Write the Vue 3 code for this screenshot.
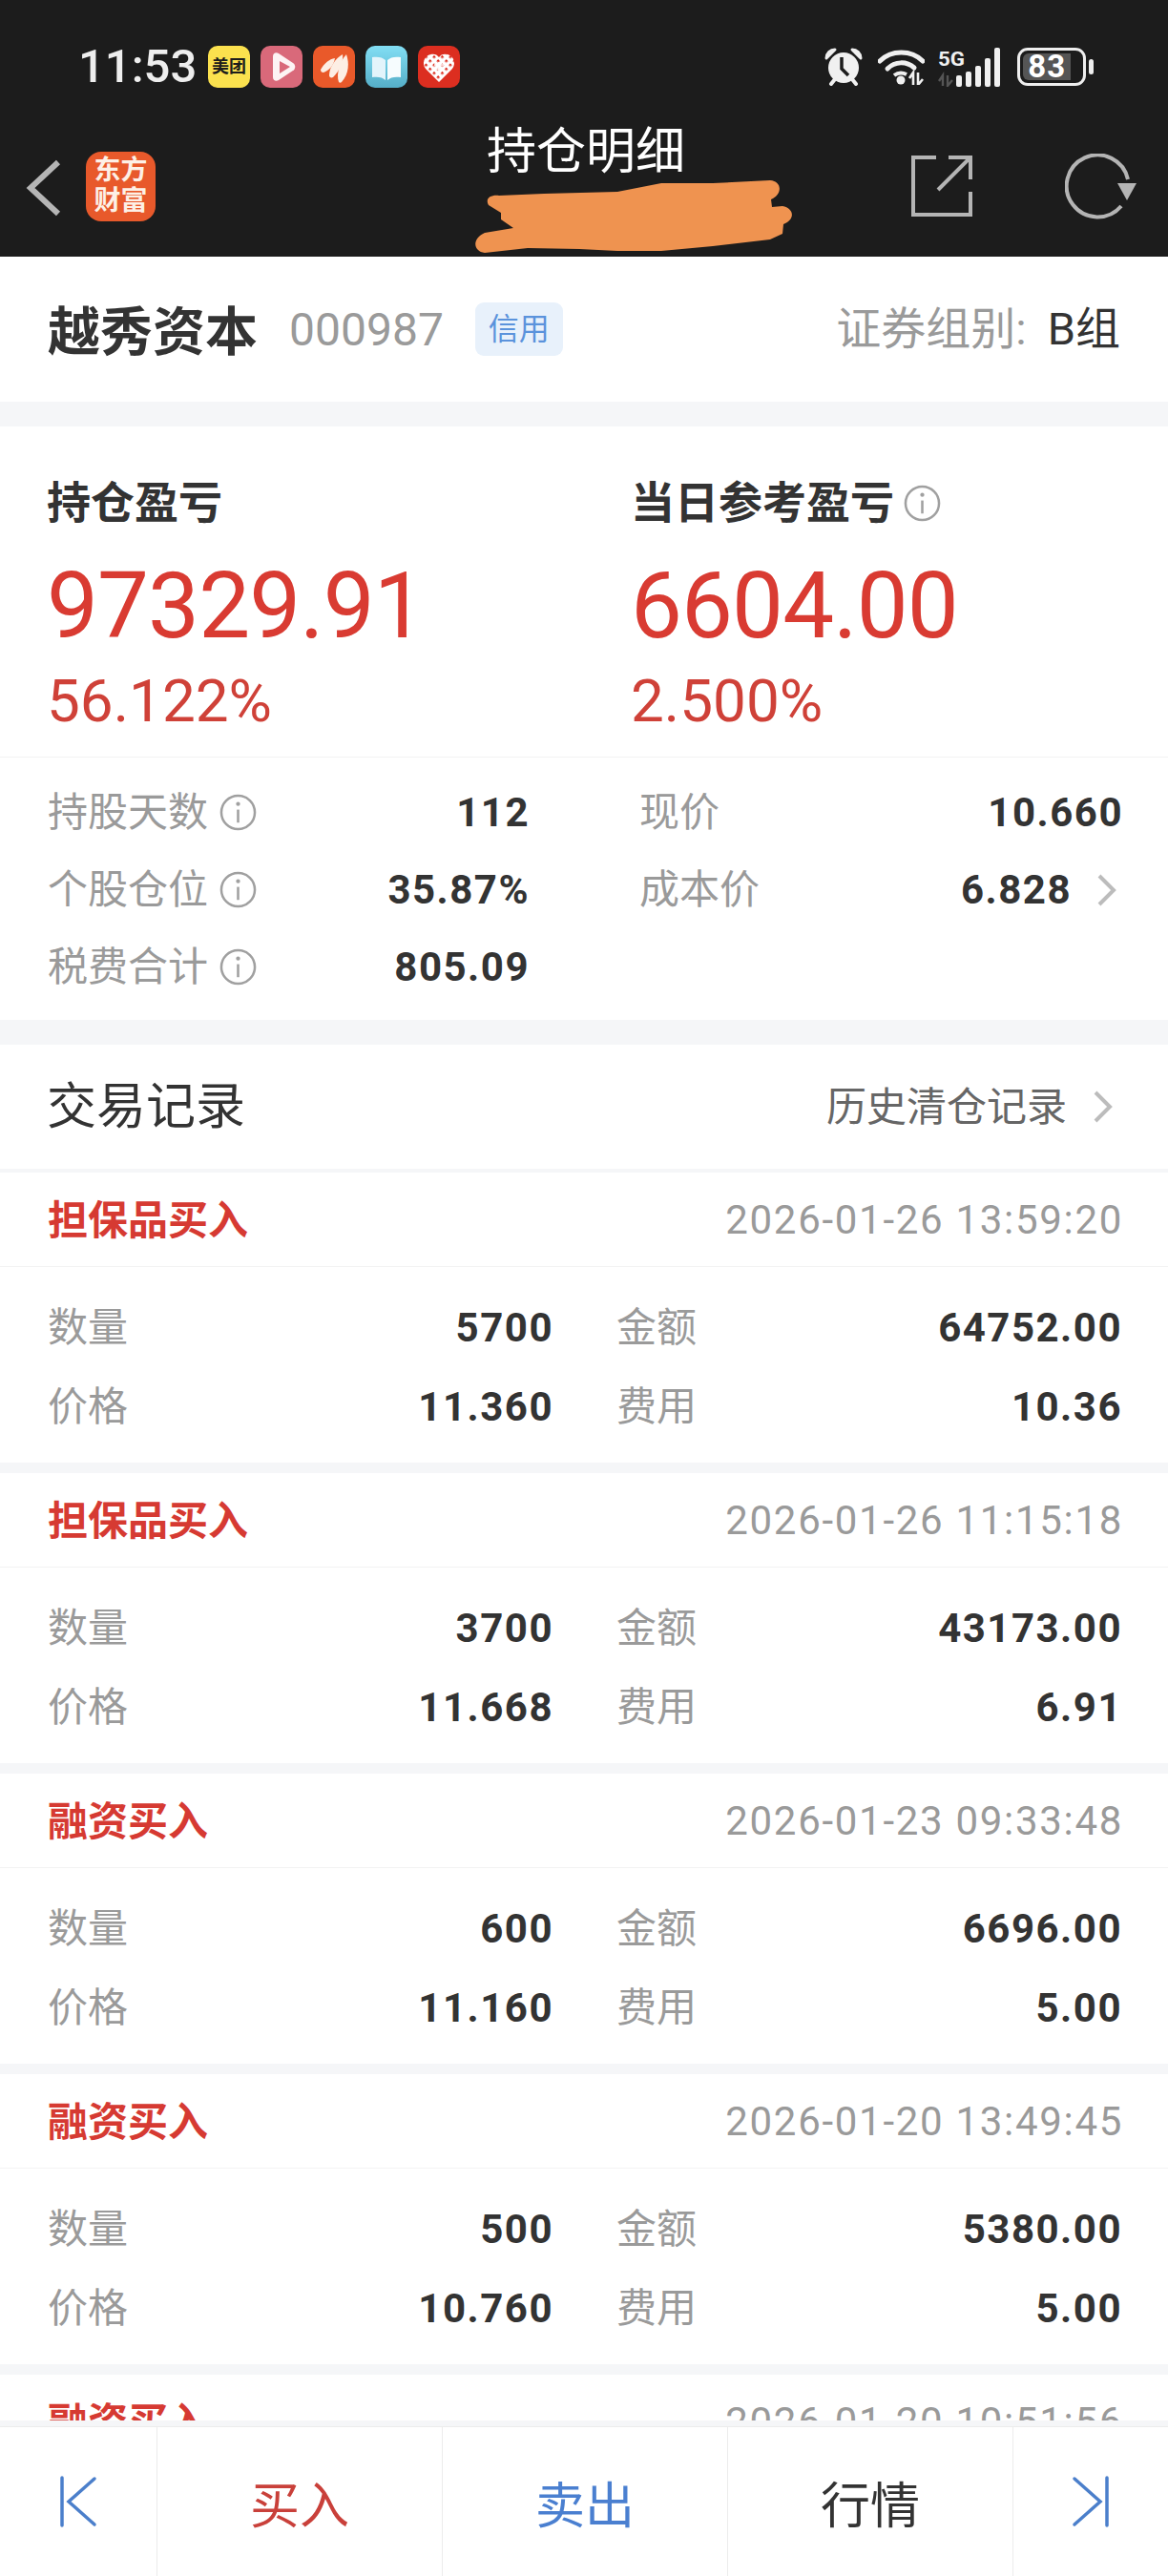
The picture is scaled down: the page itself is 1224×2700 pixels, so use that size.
<script setup>
const leftStats = [
  { label: '持股天数', value: '112' },
  { label: '个股仓位', value: '35.87%' },
  { label: '税费合计', value: '805.09' },
]
const records = [
  { type: '担保品买入', time: '2026-01-26 13:59:20', qty: '5700', amount: '64752.00', price: '11.360', fee: '10.36' },
  { type: '担保品买入', time: '2026-01-26 11:15:18', qty: '3700', amount: '43173.00', price: '11.668', fee: '6.91' },
  { type: '融资买入', time: '2026-01-23 09:33:48', qty: '600', amount: '6696.00', price: '11.160', fee: '5.00' },
  { type: '融资买入', time: '2026-01-20 13:49:45', qty: '500', amount: '5380.00', price: '10.760', fee: '5.00' },
  { type: '融资买入', time: '2026-01-20 10:51:56' },
]
</script>

<template>
  <div class="page">
    <header class="dark">
      <div class="status">
        <span class="clock">11:53</span>
        <div class="apps">
          <span class="app meituan">美团</span>
          <svg class="app" viewBox="0 0 44 44"><rect width="44" height="44" rx="10" fill="#d9697a"/><path d="M13 11c0-3 3-5 6-3l15 10c3 2 3 6 0 8L19 36c-3 2-6 0-6-3z" fill="#fdf3f4"/><path d="M20 16l11 6-11 7z" fill="#d9697a"/></svg>
          <svg class="app" viewBox="0 0 44 44"><rect width="44" height="44" rx="10" fill="#e9592a"/><path d="M8 25C12 18 17 14 23 13C22 20 17 26 11 28C9 28 8 27 8 25Z" fill="#fdeee4"/><path d="M17 31C17 22 24 13 31 9C32 17 28 26 21 33C19 34 17 33 17 31Z" fill="#fdeee4"/><path d="M27 38C24 30 28 16 35 9C38 18 38 29 30 38C29 39 28 39 27 38Z" fill="#fdeee4"/></svg>
          <svg class="app" viewBox="0 0 44 44"><defs><linearGradient id="bookBg" x1="0" y1="0" x2="0" y2="1"><stop offset="0" stop-color="#82def4"/><stop offset="1" stop-color="#55aec8"/></linearGradient></defs><rect width="44" height="44" rx="10" fill="url(#bookBg)"/><path d="M7 12c6-1 11 0 14 3v21c-3-3-8-4-14-3z" fill="#e3f4fb"/><path d="M37 12c-6-1-11 0-14 3v21c3-3 8-4 14-3z" fill="#f6fcfe"/></svg>
          <svg class="app" viewBox="0 0 44 44"><defs><pattern id="pdd" width="6" height="6" patternUnits="userSpaceOnUse" patternTransform="rotate(45)"><rect width="6" height="6" fill="#fff"/><rect x="1" y="1" width="2.500" height="2.500" fill="#dc2e20"/></pattern></defs><rect width="44" height="44" rx="10" fill="#dc2e20"/><path d="M22 38L8 24c-4-5-2-13 5-15 4-1 7 0 9 3 2-3 5-4 9-3 7 2 9 10 5 15z" fill="url(#pdd)"/><path d="M22 17v10M17 20h10M17 24h10" stroke="#fff" stroke-width="1.500"/></svg>
        </div>
        <div class="sys">
          <svg class="alarm" viewBox="0 0 40 40"><path d="M2 11c0-5 4-9 9-9L2 11zM38 11c0-5-4-9-9-9l9 9z" fill="#f0f0f0" stroke="#f0f0f0" stroke-width="3" stroke-linejoin="round"/><path d="M7 38l4-5M33 38l-4-5" stroke="#f0f0f0" stroke-width="4" stroke-linecap="round"/><circle cx="20" cy="21" r="16" fill="#f0f0f0"/><path d="M18 10v12l7 7" fill="none" stroke="#1c1c1c" stroke-width="3.500"/></svg>
          <svg class="wifi" viewBox="0 0 49 38"><path d="M2 13c12-12 33-12 45 0" fill="none" stroke="#f0f0f0" stroke-width="5" stroke-linecap="round"/><path d="M10 21c8-8 20-8 28-1" fill="none" stroke="#f0f0f0" stroke-width="5" stroke-linecap="round"/><path d="M17 28c4-3 9-3 13-1" fill="none" stroke="#f0f0f0" stroke-width="4"/><circle cx="24" cy="33" r="4.500" fill="#f0f0f0"/><path d="M37 38V25l-4 6M42 25v13l5-6" fill="none" stroke="#f0f0f0" stroke-width="2.600"/></svg>
          <svg class="net" viewBox="0 0 67 42"><text x="0" y="20" class="five-g" textLength="28" lengthAdjust="spacingAndGlyphs">5G</text><path d="M5 41V30l-4 6M10 30v11l5-6" fill="none" stroke="#555" stroke-width="2.400"/><rect x="19" y="30" width="6" height="12" rx="2" fill="#f0f0f0"/><rect x="29" y="26" width="6" height="16" rx="2" fill="#f0f0f0"/><rect x="39" y="20" width="6" height="22" rx="2" fill="#f0f0f0"/><rect x="49" y="12" width="6" height="30" rx="2" fill="#f0f0f0"/><rect x="59" y="1" width="6" height="41" rx="2" fill="#f0f0f0"/></svg>
          <div class="battery-wrap">
            <div class="battery"><span class="level">83</span></div>
            <span class="nub"></span>
          </div>
        </div>
      </div>
      <div class="nav">
        <svg class="back" viewBox="0 0 40 62"><path d="M35 4L6 31l29 27" fill="none" stroke="#b5b5b5" stroke-width="6"/></svg>
        <div class="logo"><span>东方</span><span>财富</span></div>
        <h1 class="title">持仓明细</h1>
        <svg class="share" viewBox="0 0 66 66"><path d="M27 3H3v60h60V39M40 3h23v23M63 3L29 37" fill="none" stroke="#b4b4b4" stroke-width="4"/></svg>
        <svg class="refresh" viewBox="0 0 76 70"><path d="M59 55A32.500 32.500 0 1 1 66 27" fill="none" stroke="#b4b4b4" stroke-width="4"/><path d="M55 31h20l-10 18z" fill="#b4b4b4"/></svg>
      </div>
      <svg class="scribble" viewBox="0 0 1224 269"><path d="M512 215C508 208 514 204 523 205L570 203L647 201L693 192L747 192L807 189C820 190 820 204 808 209L809 217L820 216C832 218 834 230 821 235L820 245L807 251L747 258L693 263L647 263L607 261L553 260L508 265C496 264 494 250 508 244L538 239L525 230L525 223Z" fill="#ef9350"/></svg>
    </header>

    <main class="scroll">
      <section class="stock">
        <div class="stock-name">
          <strong>越秀资本</strong>
          <span class="code">000987</span>
          <span class="badge">信用</span>
        </div>
        <div class="group"><span class="group-label">证券组别:</span><span>B组</span></div>
      </section>

      <section class="holding">
        <div class="pnl">
          <div class="pnl-col">
            <div class="pnl-label">持仓盈亏</div>
            <div class="pnl-value">97329.91</div>
            <div class="pnl-pct">56.122%</div>
          </div>
          <div class="pnl-col right">
            <div class="pnl-label">当日参考盈亏
              <svg class="info" viewBox="0 0 40 40"><circle cx="20" cy="20" r="18" fill="none" stroke="#a0a0a0" stroke-width="2.600"/><circle cx="20" cy="11" r="2.200" fill="#a0a0a0"/><path d="M20 17v14" stroke="#a0a0a0" stroke-width="2.600"/></svg>
            </div>
            <div class="pnl-value">6604.00</div>
            <div class="pnl-pct">2.500%</div>
          </div>
        </div>
        <div class="stats">
          <div class="stats-col">
            <div v-for="s in leftStats" :key="s.label" class="stat">
              <span class="muted">{{ s.label }}</span>
              <svg class="info" viewBox="0 0 40 40"><circle cx="20" cy="20" r="18" fill="none" stroke="#a0a0a0" stroke-width="2.600"/><circle cx="20" cy="11" r="2.200" fill="#a0a0a0"/><path d="M20 17v14" stroke="#a0a0a0" stroke-width="2.600"/></svg>
              <b class="num">{{ s.value }}</b>
            </div>
          </div>
          <div class="stats-col">
            <div class="stat"><span class="muted">现价</span><b class="num">10.660</b></div>
            <div class="stat">
              <span class="muted">成本价</span>
              <b class="num">6.828</b>
              <svg class="chev" viewBox="0 0 22 36"><path d="M3 3l15 15L3 33" fill="none" stroke="#bcbcbc" stroke-width="4"/></svg>
            </div>
          </div>
        </div>
      </section>

      <section class="records">
        <div class="records-head">
          <span class="records-title">交易记录</span>
          <span class="history">历史清仓记录</span>
          <svg class="chev" viewBox="0 0 22 36"><path d="M3 3l15 15L3 33" fill="none" stroke="#bcbcbc" stroke-width="4"/></svg>
        </div>
        <article v-for="r in records" :key="r.time" class="card">
          <div class="card-head">
            <b class="type">{{ r.type }}</b>
            <span class="time">{{ r.time }}</span>
          </div>
          <div v-if="r.qty" class="card-body">
            <div class="cell"><span class="muted">数量</span><b class="num">{{ r.qty }}</b></div>
            <div class="cell"><span class="muted">金额</span><b class="num">{{ r.amount }}</b></div>
            <div class="cell"><span class="muted">价格</span><b class="num">{{ r.price }}</b></div>
            <div class="cell"><span class="muted">费用</span><b class="num">{{ r.fee }}</b></div>
          </div>
        </article>
      </section>
    </main>

    <div class="strip"></div>
    <footer class="bar">
      <div class="tab edge"><svg class="skip" viewBox="0 0 40 54"><path d="M3 2v50M37 3L10 27l27 24" fill="none" stroke="#4b7fcb" stroke-width="3.500" stroke-linecap="round"/></svg></div>
      <div class="tab buy">买入</div>
      <div class="tab sell">卖出</div>
      <div class="tab quote">行情</div>
      <div class="tab edge"><svg class="skip" viewBox="0 0 40 54"><path d="M37 2v50M3 3l27 24L3 51" fill="none" stroke="#4b7fcb" stroke-width="3.500" stroke-linecap="round"/></svg></div>
    </footer>
  </div>
</template>

<style>
html, body { margin: 0; background: #fff; }
</style>

<style scoped>
* { box-sizing: border-box; }
.page {
  width: 1224px;
  height: 2700px;
  display: flex;
  flex-direction: column;
  overflow: hidden;
  background: #fff;
  color: #333;
  font-family: Roboto, "Noto Sans CJK SC", sans-serif;
}

.dark { position: relative; height: 269px; flex: none; background: #1c1c1c; }
.status { height: 120px; padding: 35px 78px 15px 82px; display: flex; align-items: center; }
.clock { width: 136px; font-size: 49px; font-weight: 500; color: #eee; line-height: 70px; }
.apps { display: flex; gap: 11px; }
.app { display: block; width: 44px; height: 44px; }
.meituan { background: #fbe14e; border-radius: 10px; color: #1c1c1c; font-size: 18px; font-weight: 700; line-height: 44px; text-align: center; white-space: nowrap; }
.sys { margin-left: auto; display: flex; align-items: center; }
.alarm { width: 40px; height: 40px; }
.wifi { width: 49px; height: 38px; margin-left: 16px; }
.net { width: 67px; height: 42px; margin-left: 14px; }
.five-g { fill: #f0f0f0; font-size: 21px; font-weight: 700; }
.battery-wrap { display: flex; align-items: center; margin-left: 16px; }
.battery { width: 72px; height: 40px; padding: 3px; border: 3px solid #eee; border-radius: 11px; }
.level { display: block; width: 84%; height: 100%; border-radius: 6px 0 0 6px; background: #555; color: #fff; font-size: 33px; font-weight: 700; line-height: 28px; letter-spacing: 1px; text-align: center; white-space: nowrap; }
.nub { width: 5px; height: 16px; margin-left: 3px; border-radius: 3px; background: #eee; }

.nav { position: relative; height: 149px; display: flex; align-items: flex-start; padding-left: 26px; }
.back { width: 40px; height: 62px; margin-top: 46px; }
.logo { width: 73px; height: 73px; margin: 39px 0 0 24px; padding-top: 4px; display: flex; flex-direction: column; align-items: center; border-radius: 16px; background: #e8592b; color: #fdf0e6; font-size: 28px; font-weight: 700; line-height: 32px; }
.title { width: 205px; margin: 10px 0 0 347px; color: #fff; font-size: 52px; font-weight: 400; line-height: 60px; white-space: nowrap; }
.share { width: 66px; height: 66px; margin: 42px 0 0 239px; }
.refresh { width: 76px; height: 70px; margin: 41px 0 0 96px; }
.scribble { position: absolute; left: 0; top: 0; width: 1224px; height: 269px; }

.scroll { flex: 1; min-height: 0; overflow: hidden; background: #f5f6f8; }
.stock { height: 152px; padding: 0 50px; display: flex; align-items: center; justify-content: space-between; background: #fff; }
.stock-name { display: flex; align-items: center; }
.stock-name strong { padding-top: 5px; font-size: 55px; font-weight: 700; line-height: 60px; }
.code { margin-left: 33px; padding-top: 2px; color: #9a9a9a; font-size: 48px; line-height: 60px; }
.badge { width: 92px; height: 56px; margin-left: 33px; border-radius: 9px; background: #e8f1fb; color: #5b93dc; font-size: 32px; line-height: 56px; text-align: center; }
.group { display: flex; font-size: 47px; line-height: 60px; white-space: nowrap; }
.group-label { color: #9a9a9a; margin-right: 22px; }

.holding { height: 622px; margin-top: 26px; background: #fff; }
.pnl { height: 347px; display: grid; grid-template-columns: 612px 1fr; padding: 57px 50px 0 49px; border-bottom: 1px solid #f2f2f2; }
.pnl-label { display: flex; align-items: center; gap: 10px; font-size: 46px; font-weight: 700; line-height: 46px; }
.pnl-value { margin-top: 35px; color: #d93b32; font-size: 96px; letter-spacing: -.9px; line-height: 100px; }
.pnl-pct { margin-top: 15px; color: #cf4138; font-size: 62px; line-height: 70px; }

.stats { display: grid; grid-template-columns: 502px 504px; column-gap: 118px; padding: 17px 50px 0; }
.stat { height: 81px; display: flex; align-items: center; }
.muted { color: #9a9a9a; font-size: 42px; line-height: 60px; white-space: nowrap; }
.num { margin-left: auto; margin-right: -3px; color: #333; font-size: 42px; font-weight: 700; letter-spacing: 1.500px; line-height: 60px; }
.info { flex: none; width: 39px; height: 39px; }
.stat .info { margin-left: 12px; }
.stat .chev { margin: 0 3px 0 29px; }
.chev { flex: none; width: 22px; height: 36px; }

.records-head { height: 130px; margin-top: 26px; padding: 0 57px 0 49px; display: flex; align-items: center; background: #fff; }
.records-title { padding-top: 2px; font-size: 52px; line-height: 60px; }
.history { margin-left: auto; margin-right: 27px; padding-top: 2px; color: #666; font-size: 42px; line-height: 60px; }
.card { height: 304px; margin-top: 4px; margin-bottom: 11px; background: #fff; }
.card-head { height: 99px; padding: 0 50px; display: flex; align-items: center; justify-content: space-between; border-bottom: 1px solid #f3f3f3; }
.type { padding-top: 3px; color: #d63a32; font-size: 42px; font-weight: 700; line-height: 60px; }
.time { margin-right: -3px; padding-top: 1px; color: #9a9a9a; font-size: 42px; letter-spacing: 1.700px; line-height: 60px; }
.card-body { display: grid; grid-template-columns: 527px 527px; column-gap: 69px; padding: 22px 50px 0; }
.cell { height: 83px; display: flex; align-items: center; }

.strip { flex: none; height: 6px; background: #f5f6f8; }
.bar { flex: none; height: 157px; display: grid; grid-template-columns: 164px 299px 299px 299px 163px; border-top: 1px solid #ececec; background: #fff; }
.tab { display: flex; align-items: center; justify-content: center; border-left: 1px solid #ececec; font-size: 52px; }
.tab:first-child { border-left: 0; }
.skip { width: 40px; height: 54px; }
.buy { color: #c9403a; }
.sell { color: #4a7fd0; }
.quote { color: #333; }
</style>
